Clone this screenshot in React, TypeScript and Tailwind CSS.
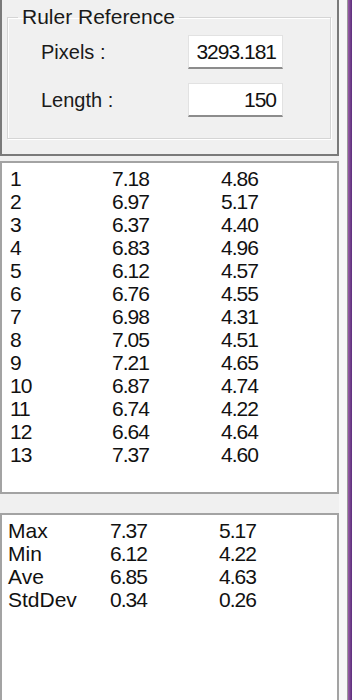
import React from 'react';

const rows: [string, string, string][] = [
  ['1', '7.18', '4.86'],
  ['2', '6.97', '5.17'],
  ['3', '6.37', '4.40'],
  ['4', '6.83', '4.96'],
  ['5', '6.12', '4.57'],
  ['6', '6.76', '4.55'],
  ['7', '6.98', '4.31'],
  ['8', '7.05', '4.51'],
  ['9', '7.21', '4.65'],
  ['10', '6.87', '4.74'],
  ['11', '6.74', '4.22'],
  ['12', '6.64', '4.64'],
  ['13', '7.37', '4.60'],
];

const stats: [string, string, string][] = [
  ['Max', '7.37', '5.17'],
  ['Min', '6.12', '4.22'],
  ['Ave', '6.85', '4.63'],
  ['StdDev', '0.34', '0.26'],
];

const font = { fontFamily: '"Liberation Sans", Arial, sans-serif' };

const Row: React.FC<{ cells: [string, string, string]; label?: boolean }> = ({ cells, label }) => (
  <div className="grid grid-cols-[102px_109px_1fr] h-[23px] items-center text-[21px] leading-[23px] text-[#111]">
    <span className={label ? '' : 'tracking-[-1px]'}>{cells[0]}</span>
    <span className="tracking-[-1px]">{cells[1]}</span>
    <span className="tracking-[-1px]">{cells[2]}</span>
  </div>
);

const Field: React.FC<{ label: string; value: string }> = ({ label, value }) => (
  <div className="flex items-center h-[34px]">
    <span className="w-[180px] pl-[33px] text-[20px] text-[#1a1a1a]">{label}</span>
    <div className="w-[95px] h-[34px] bg-white border border-[#e2e2e2] border-b-2 border-b-[#8c8c8c] flex items-center justify-end pr-[6px] text-[21px] tracking-[-1px] text-[#111]">
      {value}
    </div>
  </div>
);

const App: React.FC = () => {
  return (
    <div className="flex w-[352px] h-[700px] bg-[#f0f0f0] overflow-hidden" style={font}>
      <div className="w-[339px] flex flex-col">
        {/* ruler reference panel */}
        <div className="h-[156px] border-l-2 border-r-2 border-b-2 border-[#7a7a7a] pt-[5px] pl-[5px] pr-[6px]">
          <fieldset className="h-[134px] border border-[#d5d5d5] shadow-[inset_1px_1px_0_#ffffff,1px_1px_0_#ffffff]">
            <legend className="ml-[10px] px-[4px] text-[21px] leading-[24px] text-[#1a1a1a]">Ruler Reference</legend>
            <div className="flex flex-col gap-[14px] mt-[6px]">
              <Field label="Pixels :" value="3293.181" />
              <Field label="Length :" value="150" />
            </div>
          </fieldset>
        </div>

        <div className="h-[5px]" />

        {/* measurements list */}
        <div className="h-[333px] bg-white border-2 border-[#a3a3a3] pt-[4px] pl-[8px]">
          {rows.map((r) => (
            <Row key={r[0]} cells={r} />
          ))}
        </div>

        <div className="h-[19px]" />

        {/* statistics */}
        <div className="flex-1 bg-white border-2 border-b-0 border-[#a3a3a3] pt-[4px] pl-[6px]">
          {stats.map((r) => (
            <Row key={r[0]} cells={r} label />
          ))}
        </div>
      </div>

      {/* window edge */}
      <div className="w-[8px] bg-[#f7f7f7]" />
      <div className="w-[1px] bg-[#9a9a9a]" />
      <div className="w-[4px] bg-gradient-to-r from-[#9a5ea6] to-[#5c2d7c]" />
    </div>
  );
};

export default App;
